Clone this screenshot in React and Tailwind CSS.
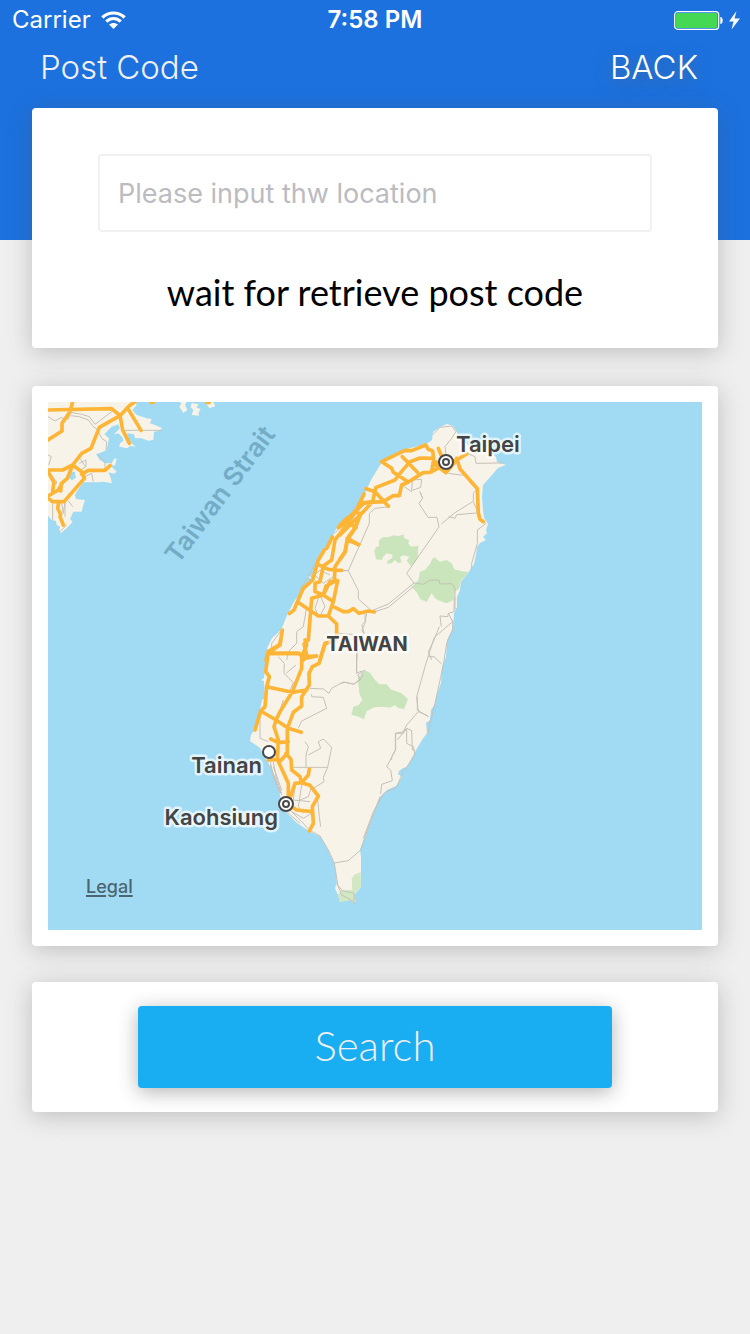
import React from "react";

const mainland =
  "M24 20H285L290 30L277 45L290 60L307 65L320 70L335 72L330 85L345 90L367 100L355 108L342 110L340 135L325 137L305 130L285 130L282 118L262 115L262 125L270 140L287 155L270 153L262 160L238 155L240 145L250 138L248 128L235 115L222 118L240 100L235 88L215 95L205 105L193 118L207 130L200 165L185 172L168 178L180 195L195 205H213L215 215L230 230L222 236L205 232L213 250L215 265L190 260L175 262H130L122 272L110 290L105 300L108 312L135 315L130 330L125 350L100 350L90 372L98 380L80 400L62 415L58 405L60 395L50 390L48 378L35 375L24 362Z";

const island =
  "M425 444L428 443L432 440L433 432L440 427L447 424L453 426L457 432L457 436L468 445L480 447L490 451L496 457L497 462L506 465L498 468L492 475L483 485L482 497L483 510L484 518L488 524L486 530L487 533L483 537L486 540L480 543L477 547L476 555L474 564L468 573L461 582L460 590L457 597L457 607L454 613L453 628L447 640L446 657L442 667L441 683L436 697L435 704L431 710L430 720L426 723L427 733L422 740L416 750L407 767L403 768L399 771L398 774L402 777L396 786L387 790L380 797L372 818L365 837L360 850L361 857L361 887L354 895L356 904L350 900L340 902L338 895L335 888L337 883L336 873L334 863L328 850L321 837L309 831L297 823L292 818L284 810L280 795L275 777L268 762L260 748L250 741L251 735L255 729L260 710L262 700L265 698L264 681L261 680L264 678L265 668L268 650L267 648L272 638L281 630L288 613L295 600L311 582L312 579L306 576L312 577L318 557L332 538L337 527L353 512L365 493L371 480L382 462L390 456L407 449Z";

function Land() {
  return (
    <>
      <g transform="translate(40 395) scale(0.33333)" fill="#f7f3e9">
        <path d={mainland} />
        <path d="M222 192L230 190L226 210L218 212L215 205ZM415 20L425 25L418 35L430 54L442 45L435 30L440 20ZM455 24L475 28L470 38L482 42L475 55L478 62L455 60L460 45L452 36ZM495 20H520L526 34L508 40L502 30Z" />
        <path d="M88 232L104 230L108 248L96 256L88 250Z" fill="#a0daf3" />
      </g>
      <path d={island} fill="#f7f3e9" />
    </>
  );
}

function Parks() {
  return (
    <g fill="#cae5bc">
      <g transform="translate(340 410) scale(0.33333)">
        <path d="M103 422L108 412L118 408L116 392L128 382L150 380L160 376L175 379L190 373L193 385L207 390L205 402L215 410L235 407L233 445L222 462L212 467L200 452L208 440L190 436L180 442L185 456L175 460L165 450L155 460L142 461L142 453L155 445L158 434L140 430L130 440L125 450L108 448Z" />
        <path d="M216 530L235 510L240 485L255 480L270 462L275 450L283 442L300 455L320 450L335 460L343 478L362 483L385 487L362 515L358 535L345 545L340 570L320 580L300 573L285 565L275 550L268 562L260 576L240 567L232 550Z" />
      </g>
      <path
        transform="translate(230 640) scale(0.33333)"
        d="M383 110L393 105L403 90L420 98L435 120L448 133L470 133L482 148L515 160L534 178L522 208L505 204L495 195L480 203L455 200L432 202L410 214L402 238L385 230L364 224L370 200L385 196L397 180L388 160Z"
      />
      <path
        opacity=".85"
        transform="translate(150 740) scale(0.33333)"
        d="M632 397L633 440L612 462L616 490L600 480L570 486L564 464L575 450H607L605 415L615 403Z"
      />
    </g>
  );
}

function MinorRoads() {
  return (
    <g fill="none" stroke="#c5c1b9" strokeWidth="3" strokeLinejoin="round">
      <g transform="translate(40 395) scale(0.33333)">
        <path d="M24 65L45 78L62 68L85 72L92 52L125 58L148 65L165 88L218 48M92 62L118 65L145 75L160 95L175 105M255 106H366M175 110L185 130L200 140L198 165M24 180L34 185L26 210M38 325V375M65 325L70 355L75 320V365M85 318L98 335M118 205L138 195V215L122 225M120 190L136 215M135 245L155 235L160 260M60 410L80 390M24 228L50 260L48 268L28 240M175 180L195 200V225" />
      </g>
      <g transform="translate(340 410) scale(0.33333)">
        <path d="M278 75L300 52L335 48L348 65L335 85L315 110L318 135M370 125L405 140L408 160L490 159M325 190L370 196M412 235L400 250V275L415 310M190 228L215 245L217 210L245 208L242 232L218 241M240 245L248 265L237 280L264 322H291L297 351L200 490L222 519M304 342L345 308L398 275M325 320L345 325L350 314L410 309M150 290L105 295L88 310V340L25 482L55 542V567L92 600M0 482H25M438 340L412 360V400L395 460V480M222 519L145 582L100 600M222 519L250 523L268 511L297 510L300 522L335 521L345 535V600" />
      </g>
      <g transform="translate(240 460) scale(0.33333)">
        <path d="M305 331H325M375 100L335 155M540 95L548 115M225 345L250 370L280 350M220 350L240 330L270 345M240 400L225 445L237 470M240 405L255 440L240 468M200 440L190 500L170 515V550L145 575L140 600M125 510L95 550V570M285 520L340 523V540M375 460L375 485L365 495L373 520L355 540L350 600M598 500L580 545L565 575L575 600M225 310L210 340L180 390M310 190L285 220M350 155L325 200" />
      </g>
      <g transform="translate(340 560) scale(0.33333)">
        <path d="M80 160L75 190L66 210L70 220M105 155L145 142L220 80M343 110L342 155L325 160L323 170L300 168L304 200M325 160L338 185L283 232L258 310L230 410L235 455L200 495L190 515L166 520V570L155 590V600M265 290H282L305 312M235 455L264 468M172 540L200 505L215 512L217 570H225M50 280V340L65 333L68 350L42 373L15 367L0 371M338 180V210L320 250L310 315L285 430L264 520" />
      </g>
      <g transform="translate(230 640) scale(0.33333)">
        <path d="M145 50L163 70L162 100L190 128L180 150M168 100L198 75M240 145L280 147L297 160L305 145L340 126L370 132L392 120L383 105L405 90M245 162V170L280 172L290 205L215 243L205 265M380 0V100M90 225V295L115 305M160 180L145 225M225 305L235 320L228 345L228 382M190 382H293L305 322L280 297L265 305L272 325L235 345M293 382L280 412L282 425L250 445M195 440L190 480L240 485M215 435L205 500L220 520M245 440L235 470L210 480M120 360L130 410L150 460M130 365L140 420L155 460M180 510L215 545L240 572M262 468L268 530L272 560M185 515L220 535L245 520M562 170V210L595 230M497 280H520L530 265V310L550 320L555 345M497 280V330L470 380L482 390L487 422L455 433L452 462M555 345L520 395L500 440L460 462L430 515L400 595" />
      </g>
      <g transform="translate(150 740) scale(0.33333)">
        <path d="M632 330L595 362L553 369L535 330L510 288L478 270M553 369L558 400L563 435L577 452L612 460V485L618 493M563 435L575 465L600 478L618 492M632 330L645 290L690 170M360 75L385 140L395 165M370 80L395 150M410 215L450 250" />
      </g>
    </g>
  );
}

function Highways() {
  return (
    <g
      fill="none"
      stroke="#feb536"
      strokeWidth="11"
      strokeLinecap="round"
      strokeLinejoin="round"
    >
      <g transform="translate(40 395) scale(0.33333)">
        <path d="M24 45L215 41L240 62L268 32L285 20M98 20L90 50L66 85V108L24 135M262 38L303 106M240 62L248 105L268 145M240 62L178 97L153 160L125 175L98 210L68 225H24M98 210L125 230L133 250L72 320H38L24 310M98 210L82 250L68 262L55 285L24 303M24 230L42 262L38 288M64 265L62 288M125 238L145 226H195L210 212M56 322L53 340L62 358L60 365L70 390M333 22H340M500 22H508" />
      </g>
      <g transform="translate(340 410) scale(0.33333)">
        <path d="M125 155L195 121L215 122L257 105L265 118L278 123L281 145L240 144L210 155L180 190L165 210L107 233L98 275L70 305L0 375M125 155L155 175L160 187L205 216L185 225L178 257H160L130 275L72 278L40 310L0 350M187 140L232 187M205 216L250 188L270 187L318 162L280 155L275 185M295 115L305 140L318 160L350 150L380 132M405 122L430 118M350 145L360 177L412 236L415 310L420 328L430 335M280 160L318 188L350 150M78 236L105 245L145 289M72 252L45 310L20 325L0 345M58 310L48 350L22 385L56 404M22 385L16 425L0 448M22 340L45 350" />
      </g>
      <g transform="translate(240 460) scale(0.33333)">
        <path d="M400 125L370 130L345 155L320 195L285 240L275 300L250 318L240 365L225 370V395L250 405L270 365L293 362L280 425L265 468H235L172 425L190 385L218 360L235 300L253 270M295 203L340 160M277 231L260 265M172 425L162 450L148 461M345 155L362 162L345 205L322 240L356 254M322 240L315 275L285 320L283 365L258 378L250 405L280 425M240 316L265 328L305 331M325 187L348 203M250 405L215 415L205 540L192 552L200 585L190 600M285 442L310 455H325L340 446L357 460L385 453L403 456M265 468L290 492V530L283 542L255 550L240 600M127 510L120 553L85 575L78 600M85 580H175L195 595L230 588" />
      </g>
      <g transform="translate(230 640) scale(0.33333)">
        <path d="M152 0L150 15L115 38L107 95L118 110L110 140L105 200L92 213L75 270M115 40H207L220 50L258 48M225 0L230 15L215 50V85L187 155L150 215L138 240L132 260L145 300L142 358L115 360M310 0L285 12L267 70L247 80L237 100L238 135L215 170V198L190 217L172 265V340L152 362L142 358L175 430V480M110 140L187 157L230 150M92 213L138 240L175 265L214 277M122 297L145 308L175 305M168 340L183 358L185 390L210 410L215 428L240 436L265 468L247 500L250 550L238 573M238 387L235 405L215 428L195 430L180 475L170 490L200 510L247 515" />
      </g>
    </g>
  );
}

function CityDot({ x, y, capital }) {
  return (
    <g fill="#fff" stroke="#484848" strokeWidth="2">
      <circle cx={x} cy={y} r={capital ? 7 : 6} />
      {capital && <circle cx={x} cy={y} r="3" />}
    </g>
  );
}

function TaiwanMap() {
  return (
    <svg
      viewBox="48 402 654 528"
      className="block w-full bg-[#a0daf3] font-['Inter','Liberation_Sans',sans-serif]"
      role="img"
      aria-label="Map of Taiwan"
    >
      <Land />
      <Parks />
      <MinorRoads />
      <Highways />
      <CityDot x={446} y={462} capital />
      <CityDot x={269} y={752} />
      <CityDot x={286} y={804} capital />
      <text
        transform="translate(178 565) rotate(-53)"
        className="fill-[#74acc5] text-[26px] font-semibold"
      >
        Taiwan Strait
      </text>
      <g
        className="fill-[#444444] text-[22px] font-semibold"
        stroke="#fff"
        strokeOpacity=".7"
        strokeWidth="5"
        strokeLinejoin="round"
        paintOrder="stroke"
      >
        <text x="456" y="452">Taipei</text>
        <text x="262" y="773" textAnchor="end">Tainan</text>
        <text x="278" y="825" textAnchor="end">Kaohsiung</text>
        <text x="367" y="651" textAnchor="middle" className="text-[20px] font-bold">TAIWAN</text>
      </g>
    </svg>
  );
}

function StatusBar() {
  return (
    <div className="grid h-10 grid-cols-3 items-center px-3 text-[24px] leading-7">
      <div className="flex items-center gap-2.5">
        <span>Carrier</span>
        <svg width="25" height="18" viewBox="0 0 25 18" aria-label="Wi-Fi">
          <g fill="none" stroke="#fff" strokeWidth="3.2">
            <path d="M1.4 6.5C7.5.5 17.500.5 23.600 6.500" />
            <path d="M5.300 10.500C9.500 6.500 15.500 6.500 19.700 10.500" />
          </g>
          <path d="M12.500 18L8 13.600C10.500 11.300 14.500 11.300 17 13.600Z" fill="#fff" />
        </svg>
      </div>
      <span className="text-center font-semibold">7:58 PM</span>
      <div className="-mr-1 flex items-center justify-end">
        <svg width="68" height="20" viewBox="0 0 68 20" aria-label="Battery charging">
          <rect x=".7" y="1.700" width="44" height="17.600" rx="3" fill="none" stroke="#fff" strokeWidth="1.200" />
          <rect x="2" y="3" width="41.400" height="15" rx="1.800" fill="#45d854" />
          <path d="M46.300 7C49.500 7 49.500 14 46.300 14Z" fill="#fff" />
          <path d="M62.500 1L55 11.500H59.500L57.500 19.500L66 8.500H60.500Z" fill="#fff" />
        </svg>
      </div>
    </div>
  );
}

const cardShadow = "shadow-[0_4px_24px_rgba(80,80,80,0.3)]";

export default function App() {
  return (
    <div className="min-h-screen bg-[#efefef] font-['Inter','Liberation_Sans',sans-serif]">
      <header className="h-60 bg-[#1c71df] text-white">
        <StatusBar />
        <div className="flex items-center justify-between pr-[52px] pl-10 text-[33px] leading-[54px] font-light">
          <h1 className="text-[#efefef]">Post Code</h1>
          <button
            type="button"
            className="text-shadow-[0_4px_16px_rgba(100,100,100,0.6)]"
          >
            BACK
          </button>
        </div>
      </header>

      <main className="relative -mt-[132px] px-8 pb-8">
        <section className={`rounded bg-white px-[66px] pt-[46px] pb-8 ${cardShadow}`}>
          <input
            type="text"
            aria-label="Location"
            placeholder="Please input thw location"
            className="block h-[78px] w-full rounded border-2 border-[#f1f1f1] px-[18px] text-[27px] placeholder:text-[#bbbbc1] focus:outline-none"
          />
          <p className="mt-9 text-center font-['Lato','Liberation_Sans',sans-serif] text-[36px] leading-[48px] text-black">
            wait for retrieve post code
          </p>
        </section>

        <section className={`mt-[38px] rounded bg-white p-4 ${cardShadow}`}>
          <div className="relative">
            <TaiwanMap />
            <a
              href="#legal"
              className="absolute bottom-8 left-[38px] text-[18px] leading-[22px] font-medium text-[#4d6570] underline decoration-2 underline-offset-2"
            >
              Legal
            </a>
          </div>
        </section>

        <section className={`mt-9 rounded bg-white py-6 ${cardShadow}`}>
          <button
            type="button"
            className="mx-auto block h-[82px] w-[474px] max-w-full rounded bg-[#19adf2] pb-1 font-['Lato','Liberation_Sans',sans-serif] text-[42px] font-light text-[#efefef] shadow-[0_4px_20px_rgba(0,0,0,0.3)]"
          >
            Search
          </button>
        </section>
      </main>
    </div>
  );
}
